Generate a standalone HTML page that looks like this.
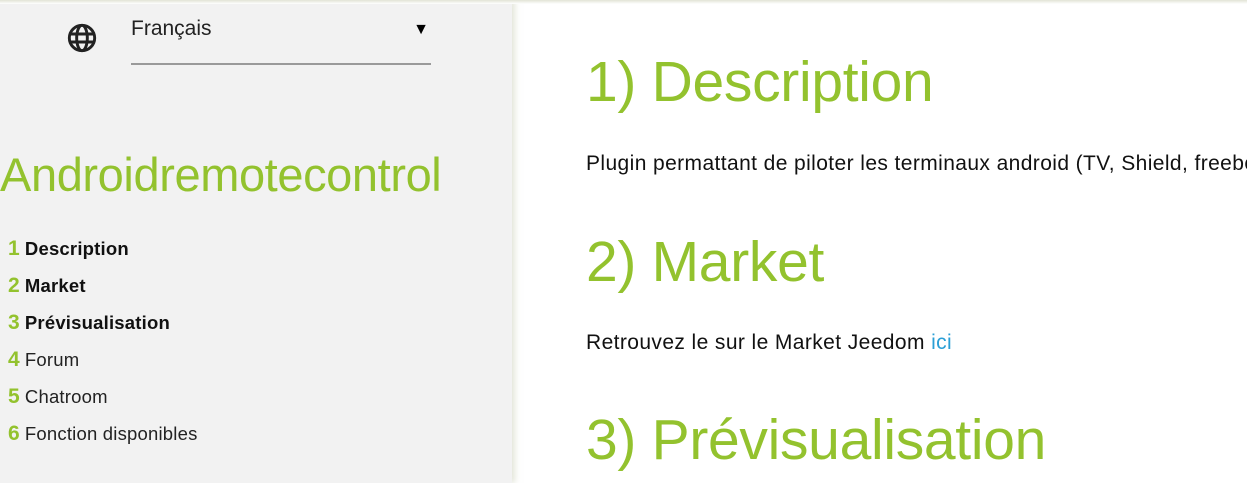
<!DOCTYPE html>
<html><head><meta charset="utf-8"><style>
body{margin:0;width:1247px;height:483px;overflow:hidden;background:#fff;font-family:"Liberation Sans",sans-serif;position:relative}
.side{position:absolute;left:0;top:0;width:512px;height:483px;background:#f2f2f2;box-shadow:3px 0 6px rgba(200,205,180,.5)}
.topbar{position:absolute;left:0;top:0;width:1247px;height:4px;background:linear-gradient(#e2e4d6,#fff);z-index:2}
.sel{position:absolute;left:131px;top:17px;width:300px;height:46px;border-bottom:2px solid #9a9a9a;font-size:21px;color:#222}
.sel span{position:absolute;right:2px;top:4px;font-size:16px;color:#000}
.title{position:absolute;left:0;top:147px;font-size:47px;color:#93c22e;letter-spacing:-0.4px}
.toc{position:absolute;left:8px;top:237px;font-size:18.5px;color:#222;letter-spacing:0.2px}
.toc div{height:37px}
.toc b{font-weight:bold;color:#111}
.toc i{font-style:normal;font-weight:bold;color:#93c22e;font-size:21px;margin-right:5px}
h2{position:absolute;left:586px;margin:0;font-weight:normal;font-size:57px;letter-spacing:-0.3px;color:#93c22e}
p{position:absolute;left:586px;margin:0;font-size:21px;letter-spacing:0.4px;color:#111;white-space:nowrap}
a{color:#2a9fd6;text-decoration:none}
</style></head><body>
<div class="topbar"></div>
<div class="side">
<svg style="position:absolute;left:66px;top:22px" width="32" height="32" viewBox="0 0 24 24" fill="none" stroke="#222" stroke-width="2.2"><circle cx="12" cy="12" r="9.5"/><ellipse cx="12" cy="12" rx="4" ry="9.5"/><path d="M2.5 9h19M2.5 15h19"/></svg>
<div class="sel">Français<span>▼</span></div>
<div class="title">Androidremotecontrol</div>
<div class="toc">
<div><i>1</i><b>Description</b></div>
<div><i>2</i><b>Market</b></div>
<div><i>3</i><b>Prévisualisation</b></div>
<div><i>4</i>Forum</div>
<div><i>5</i>Chatroom</div>
<div><i>6</i>Fonction disponibles</div>
</div>
</div>
<h2 style="top:49px">1) Description</h2>
<p style="top:152px">Plugin permattant de piloter les terminaux android (TV, Shield, freebox...)</p>
<h2 style="top:229px">2) Market</h2>
<p style="top:331px">Retrouvez le sur le Market Jeedom <a>ici</a></p>
<h2 style="top:407px">3) Prévisualisation</h2>
</body></html>
